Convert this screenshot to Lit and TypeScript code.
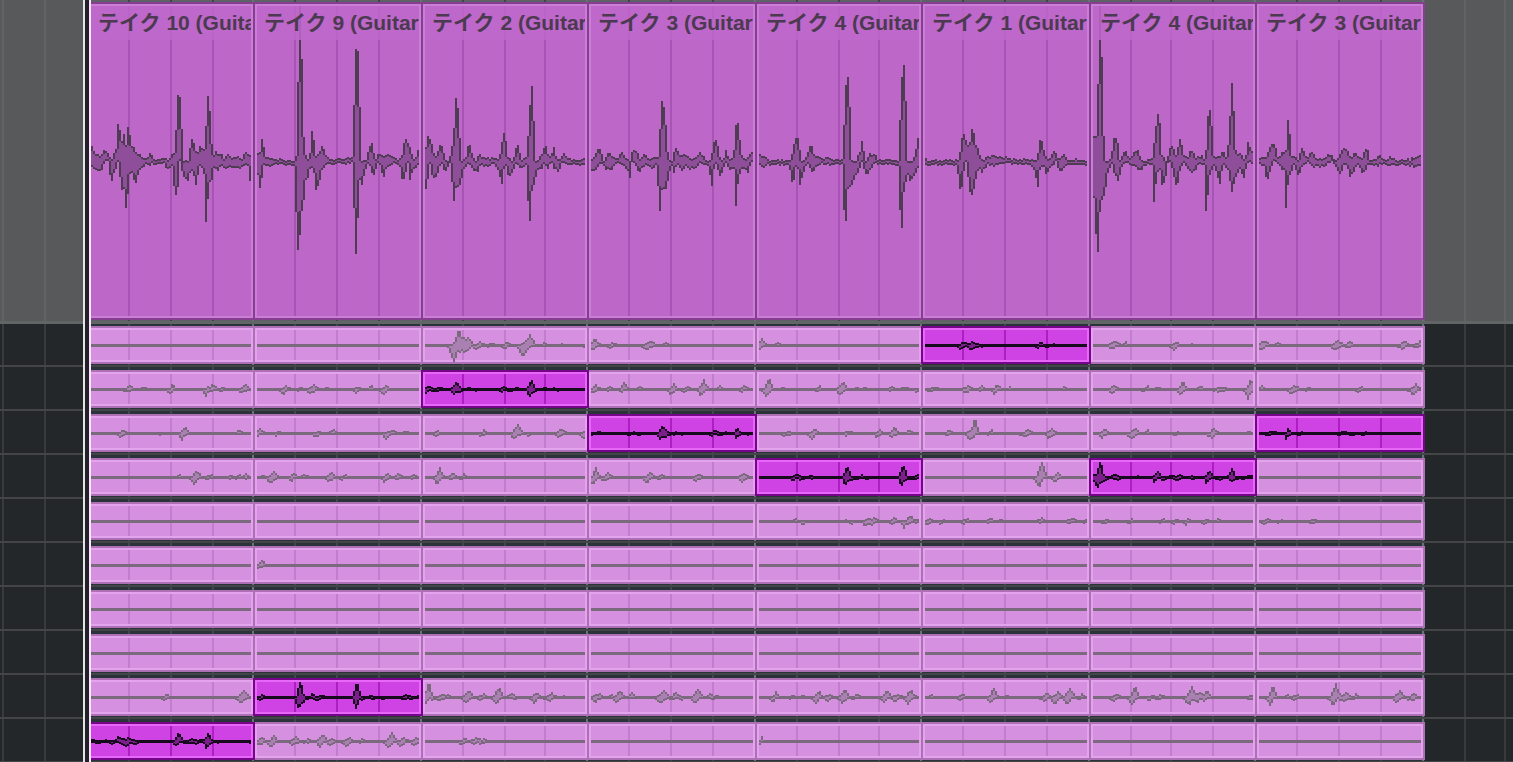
import { LitElement, html, svg, css } from "lit";
import { customElement, property } from "lit/decorators.js";

type Pair = [number, number];
/** x, height above the centre line, depth below it, half width */
type Bump = [number, number, number, number];

interface Segment {
  start: number;
  width: number;
  name: string;
  lane: number;
  top: Pair[];
  bottom: Pair[];
}

const CENTER = 161;
const TAKE_SCALE = 0.11;

const pairs = (text: string): Pair[] =>
  text.trim().split(/\s+/).map((p) => p.split(",").map(Number) as Pair);

const bumps = (text: string): Bump[] =>
  text.trim() === ""
    ? []
    : text.trim().split(/\s+/).map((p) => {
        const [x, up, down, half] = p.split(",").map(Number);
        return [x, up, down, half ?? 5] as Bump;
      });

const SEGMENTS: Segment[] = [
  {
    start: 87, width: 166, name: "テイク 10 (Guitar)", lane: 9,
    top: pairs("91,148 95,154 99,157 101,153 105,150 109,156 111,159 115,150 117,123 119,129 121,141 123,136 125,145 127,128 129,136 131,146 135,152 140,156 145,158 149,154 153,159 158,160 163,158 168,160 171,154 174,152 175,130 177,96 179,98 181,130 183,162 187,162 189,150 191,140 193,145 196,154 199,147 202,151 204,148 205,126 207,95 209,112 211,145 213,155 216,151 218,160 220,150 222,160 227,155 232,159 236,156 240,160 246,152 249,155 251,158"),
    bottom: pairs("91,168 94,171 100,172 102,166 107,160 109,175 111,181 113,174 115,168 117,163 119,178 121,189 124,190 125,207 127,194 129,175 131,172 134,185 137,176 139,169 144,165 150,164 158,163 164,165 168,171 171,165 173,185 175,194 177,188 179,160 182,176 187,180 190,170 193,176 195,185 197,174 200,163 203,175 205,221 207,199 209,181 211,179 213,168 218,172 220,164 226,169 233,167 238,169 243,165 247,165 249,180 251,180"),
  },
  {
    start: 253, width: 168, name: "テイク 9 (Guitar)", lane: 8,
    top: pairs("257,154 259,153 261,141 263,146 265,158 269,158 273,160 278,159 283,161 294,161 296,154 297,84 299,6 301,60 303,138 305,155 307,160 309,152 311,131 313,141 315,155 318,156 320,144 322,147 325,156 331,160 337,157 342,159 351,158 353,106 355,50 357,51 359,108 361,162 365,162 368,150 370,141 372,147 374,160 378,153 382,158 387,153 391,157 397,160 401,155 403,143 405,139 408,144 411,155 414,160 417,150 419,151"),
    bottom: pairs("257,174 259,189 261,178 262,165 270,167 277,164 283,163 293,163 295,211 297,250 299,236 301,210 303,200 305,180 308,176 310,165 313,172 315,189 318,184 321,170 325,164 330,165 338,163 345,164 351,163 353,208 355,254 357,217 359,180 361,184 364,170 368,163 371,172 374,174 377,164 380,166 382,180 385,170 390,164 398,164 400,172 402,183 404,175 407,164 409,179 412,170 416,168 419,163"),
  },
  {
    start: 421, width: 166, name: "テイク 2 (Guitar)", lane: 1,
    top: pairs("425,148 427,135 430,140 432,152 435,158 438,147 440,143 442,147 444,158 448,161 450,155 453,128 455,99 457,108 459,140 461,161 465,158 467,148 469,145 472,156 475,160 478,154 482,158 490,158 498,159 501,142 503,134 505,142 507,156 511,161 514,154 516,144 518,150 520,160 525,158 527,136 529,104 531,85 533,123 535,162 540,157 543,150 545,146 548,160 551,152 553,147 556,161 560,158 563,155 567,159 575,160 585,160"),
    bottom: pairs("425,190 427,178 429,164 431,174 434,181 437,172 440,162 444,172 447,166 450,163 451,182 453,202 455,188 459,184 461,178 463,168 468,163 472,170 476,173 479,165 485,166 493,164 498,172 501,183 503,168 505,166 508,178 512,172 516,162 520,170 525,166 527,200 529,221 531,191 534,182 537,170 541,168 544,162 547,170 550,160 553,168 557,171 561,164 570,165 585,164"),
  },
  {
    start: 587, width: 168, name: "テイク 3 (Guitar)", lane: 2,
    top: pairs("591,159 594,155 597,148 600,152 603,160 608,153 612,156 616,160 621,154 625,159 629,162 632,147 635,152 640,160 644,153 647,158 651,160 654,157 657,158 659,128 661,101 664,112 666,140 668,162 672,160 674,146 677,152 680,158 682,153 686,156 690,160 694,158 699,153 704,158 708,163 711,155 712,142 716,140 718,155 722,162 725,150 728,160 732,158 734,145 735,127 737,123 739,142 741,155 745,160 748,156 751,152 753,153"),
    bottom: pairs("591,171 596,170 600,162 605,169 611,170 616,163 620,163 626,168 629,177 631,163 635,165 638,174 641,168 646,163 650,169 655,166 657,186 659,211 661,190 665,190 668,175 671,163 673,172 676,165 681,171 686,165 688,169 695,167 701,163 707,165 709,175 711,185 713,168 716,162 718,180 721,172 725,163 729,169 733,168 735,205 737,183 739,174 742,168 747,172 751,162 753,164"),
  },
  {
    start: 755, width: 166, name: "テイク 4 (Guitar)", lane: 3,
    top: pairs("759,155 764,157 767,160 772,160 780,161 790,161 792,146 796,135 799,150 801,162 805,158 808,150 810,141 813,155 817,156 822,160 829,158 834,161 842,161 843,126 845,86 847,76 849,109 851,160 855,162 859,152 861,141 863,152 865,162 869,155 874,155 878,161 890,160 898,161 899,122 901,78 903,66 905,102 907,162 912,161 915,150 917,138 919,138"),
    bottom: pairs("759,166 763,167 769,164 779,165 788,163 790,175 792,192 794,170 796,162 799,185 802,174 806,164 811,172 815,168 820,163 826,166 834,163 841,164 843,210 845,220 847,190 851,185 855,175 858,172 861,162 864,174 868,172 873,165 880,162 890,164 897,165 899,210 901,227 903,193 906,175 909,180 914,174 919,165"),
  },
  {
    start: 921, width: 168, name: "テイク 1 (Guitar)", lane: 0,
    top: pairs("925,160 940,160 950,160 958,161 960,146 962,132 965,140 968,150 970,134 972,127 974,141 977,150 980,160 985,158 992,156 998,158 1006,158 1015,160 1030,160 1036,160 1038,146 1040,135 1043,152 1046,161 1050,157 1054,149 1058,160 1063,156 1067,160 1087,160"),
    bottom: pairs("925,165 940,164 950,164 956,165 958,181 960,198 962,175 965,163 968,184 970,199 972,193 975,178 978,168 981,172 986,165 994,166 1010,163 1030,164 1034,172 1037,187 1039,170 1042,165 1046,176 1050,166 1055,162 1058,170 1062,170 1066,164 1087,164"),
  },
  {
    start: 1089, width: 166, name: "テイク 4 (Guitar)", lane: 3,
    top: pairs("1093,137 1095,135 1097,84 1099,6 1101,57 1103,135 1105,162 1110,160 1112,141 1114,135 1117,145 1119,161 1124,152 1129,158 1133,154 1137,150 1141,161 1148,161 1152,158 1154,130 1157,114 1160,130 1161,155 1165,161 1168,154 1170,144 1173,148 1176,157 1178,138 1180,143 1183,155 1187,156 1191,150 1195,158 1200,156 1204,160 1206,140 1207,117 1209,110 1211,128 1213,155 1218,158 1222,151 1226,158 1229,118 1231,82 1233,110 1235,152 1240,155 1244,160 1247,144 1250,148 1253,157"),
    bottom: pairs("1093,198 1095,233 1097,251 1099,211 1101,200 1104,193 1107,172 1111,164 1114,176 1117,181 1120,170 1124,163 1130,165 1135,168 1140,170 1145,164 1151,165 1153,203 1155,185 1158,163 1161,185 1164,180 1167,163 1170,163 1173,178 1176,190 1178,175 1182,162 1187,170 1193,172 1198,164 1203,166 1205,210 1207,196 1209,175 1212,165 1215,172 1219,183 1222,165 1227,170 1231,193 1234,180 1239,170 1243,178 1247,163 1253,163"),
  },
  {
    start: 1255, width: 168, name: "テイク 3 (Guitar)", lane: 2,
    top: pairs("1259,159 1265,158 1268,150 1271,145 1274,145 1277,158 1282,152 1285,152 1286,140 1287,122 1289,134 1291,155 1297,160 1301,149 1306,157 1310,153 1316,158 1323,160 1328,154 1335,160 1338,158 1340,150 1346,150 1350,157 1354,152 1359,158 1362,158 1364,147 1367,152 1369,160 1374,160 1379,156 1384,160 1390,157 1396,160 1410,160 1416,155 1421,156"),
    bottom: pairs("1259,164 1263,166 1266,180 1269,172 1273,160 1278,166 1283,170 1285,208 1287,184 1289,176 1293,165 1298,176 1301,168 1306,163 1312,167 1322,167 1330,161 1336,167 1338,176 1341,170 1344,162 1349,176 1353,172 1356,164 1361,173 1364,170 1368,164 1376,166 1384,163 1390,166 1400,164 1414,167 1421,164"),
  },
];

const LANES: Bump[][] = [
  bumps("457,17,3,5 461,9,6,6 455,3,16,6 466,8,8,6 478,4,4,5 490,2,2,5 505,3,3,6 528,11,3,6 524,4,12,6 542,3,2,4 560,2,1,2 584,1,3,2 593,6,4,6 611,3,2,6 648,4,4,8 664,3,2,4 760,6,4,6 776,3,1,6 1113,4,3,7 1124,3,1,4 1175,4,4,5 1190,2,1,4 1262,5,5,6 1277,3,1,5 1336,5,5,6 1348,4,2,5 1403,5,4,5 1418,4,2,6"),
  bumps("128,4,3,5 142,3,1,4 171,5,4,4 207,3,6,4 211,5,2,5 221,3,2,4 243,5,4,5 284,4,5,5 298,3,2,4 312,5,4,5 325,2,1,4 357,3,4,4 370,3,1,4 384,4,5,5 398,2,1,2 594,4,3,5 608,3,2,4 622,7,4,4 638,3,1,5 672,5,5,5 686,3,3,5 702,10,7,4 718,3,1,4 743,4,2,5 767,11,7,5 781,3,1,5 818,3,2,4 841,8,6,5 855,3,1,4 863,3,1,3 890,3,2,4 903,3,1,4 918,1,4,2 932,3,2,7 967,4,4,6 980,3,2,4 995,5,5,4 1008,3,1,3 1062,3,2,4 1113,4,4,5 1146,3,2,4 1157,3,1,4 1181,9,6,4 1198,3,1,4 1220,3,3,7 1249,11,9,4 1260,4,2,5 1293,4,4,6 1307,3,1,4 1359,3,3,4 1414,5,5,5"),
  bumps("122,4,4,4 161,2,2,3 183,7,6,4 237,3,1,6 258,5,4,4 277,3,2,5 317,2,4,4 332,4,1,5 387,2,5,4 391,4,2,5 403,3,1,4 436,3,3,4 482,3,3,4 516,9,6,5 529,2,2,3 560,4,4,6 584,4,6,4 786,3,3,6 813,6,6,4 847,3,2,5 878,4,4,4 893,6,4,5 908,3,1,4 948,3,2,5 973,16,3,4 971,6,7,6 990,3,2,4 1005,2,2,3 1026,4,4,6 1050,5,5,5 1103,4,4,5 1133,6,6,5 1146,3,1,4 1176,2,2,3 1212,5,5,5 1247,3,1,4"),
  bumps("103,1,2,2 178,2,2,3 195,7,7,5 209,3,2,4 230,2,2,3 237,3,2,3 244,4,2,4 260,2,2,3 272,6,7,5 292,4,4,4 303,3,1,4 330,5,4,5 343,3,2,5 385,4,4,5 397,4,2,5 412,3,2,4 438,10,7,4 451,4,2,5 462,3,2,3 594,9,7,4 606,5,4,5 648,5,6,5 660,3,2,4 697,3,4,5 743,4,4,6 1040,16,10,5 1056,4,4,5"),
  bumps("794,3,1,2 804,1,4,4 845,2,1,3 853,1,3,3 867,4,5,5 873,4,4,4 893,4,3,5 909,6,2,5 905,2,7,3 918,2,2,3 928,3,3,5 942,2,3,3 965,3,3,5 988,3,2,4 1000,3,2,3 1040,3,2,5 1070,3,2,6 1085,3,1,3 1105,2,2,4 1130,3,2,4 1160,3,2,4 1175,3,2,3 1187,3,3,4 1205,3,3,5 1217,3,1,3 1265,3,3,5 1280,2,2,5 1312,3,3,4"),
  bumps("260,5,4,4"),
  [],
  [],
  bumps("165,3,3,5 242,7,6,6 427,15,5,4 434,1,4,4 440,4,3,4 446,3,1,3 467,7,6,5 481,4,3,4 497,10,6,5 510,4,1,4 516,1,3,3 535,5,5,5 550,4,4,6 561,2,1,3 597,4,4,6 609,3,1,3 618,7,6,5 630,4,1,4 662,7,6,6 674,5,2,4 682,1,3,3 696,8,6,5 709,4,1,4 715,2,2,3 774,6,5,3 790,2,1,3 802,2,1,3 817,6,6,5 828,3,4,5 843,8,6,5 855,4,2,5 885,7,5,5 896,4,5,5 909,8,6,5 930,3,1,5 961,3,3,5 992,10,6,4 1005,3,1,5 1045,5,5,4 1056,5,6,6 1068,9,7,5 1080,3,2,4 1115,4,4,4 1133,12,8,4 1150,3,4,4 1159,4,3,4 1190,11,8,5 1198,5,6,4 1205,8,4,4 1250,3,2,4 1271,12,8,4 1285,3,1,3 1295,3,3,4 1334,13,8,5 1344,5,5,5 1354,3,2,4 1398,7,5,5 1412,4,3,6"),
  bumps("260,4,4,5 272,6,7,4 294,4,4,6 306,3,2,4 321,7,5,5 331,3,4,4 347,4,5,5 360,3,2,3 390,9,6,5 402,4,5,5 415,4,4,5 463,3,3,5 475,4,2,6 482,2,3,4 760,4,3,3"),
];

/** Beat positions of the ruler; every fourth one opens a bar. */
const BEATS = [
  2, 44, 86, 128, 170, 212, 252, 294, 336, 378, 420, 462, 504, 544, 586, 628,
  670, 712, 754, 796, 838, 878, 920, 962, 1004, 1046, 1088, 1130, 1170, 1212,
  1254, 1296, 1338, 1380, 1422, 1464, 1504,
];
while (BEATS[BEATS.length - 1] < 3800) BEATS.push(BEATS[BEATS.length - 4] + 167);

const isBar = (index: number) => index % 4 === 2;

function sample(points: Pair[], x: number): number {
  if (x <= points[0][0]) return points[0][1];
  for (let i = 1; i < points.length; i++) {
    const [x1, y1] = points[i];
    if (x <= x1) {
      const [x0, y0] = points[i - 1];
      return y0 + ((y1 - y0) * (x - x0)) / (x1 - x0);
    }
  }
  return points[points.length - 1][1];
}

/** Repeatable fine grain of the signal, between -1 and 1. */
function grain(x: number): number {
  const v = Math.sin(x * 12.9898) * 43758.5453;
  return (v - Math.floor(v)) * 2 - 1;
}

/** Two-pixel columns: one path for the silhouette, one for the body inside its rim. */
function trace(xs: number[], tops: number[], ends: number[], rim: number) {
  let outer = "";
  let inner = "";
  xs.forEach((x, i) => {
    const t = tops[i];
    const b = ends[i];
    outer += `M${x} ${t}h2V${b}h-2z`;
    const it = Math.max(t + rim, tops[i - 1] ?? t, tops[i + 1] ?? t);
    const ib = Math.min(b - rim, ends[i - 1] ?? b, ends[i + 1] ?? b);
    if (ib > it) inner += `M${x} ${it}h2V${ib}h-2z`;
  });
  return { outer, inner };
}

@customElement("comp-clip")
class CompClip extends LitElement {
  @property({ attribute: false }) segment!: Segment;
  @property({ type: Number }) lane = -1;
  @property({ type: Boolean, reflect: true }) chosen = false;

  static styles = css`
    :host {
      --fill: #d690e0;
      --rim: #e3a3ed;
      --edge: #ae70b5;
      --beat: #c27dce;
      --wave: #7b6a7e;
      --body: #aa80b2;
      position: relative;
      display: grid;
      box-sizing: border-box;
      flex: none;
      margin-right: -2px;
      overflow: hidden;
      background: var(--fill);
      border: 2px solid var(--edge);
      box-shadow: inset 0 0 0 2px var(--rim);
    }
    :host([chosen]) {
      --fill: #cf42e4;
      --rim: #e767f8;
      --edge: #77058a;
      --beat: #ae1ec4;
      --wave: #170a1c;
      --body: #7c1f8c;
      z-index: 1;
    }
    :host([main]) {
      --fill: #bd68c9;
      --rim: #cb7ed6;
      --edge: #853e90;
      --beat: #a853b6;
      --wave: #4d3c52;
      --body: #8e4e99;
    }
    .wave {
      grid-area: 1 / 1;
      display: block;
    }
    .beat {
      fill: var(--beat);
    }
    .outer {
      fill: var(--wave);
    }
    .inner {
      fill: var(--body);
    }
    .name {
      grid-area: 1 / 1;
      align-self: start;
      margin: 2px 2px 0;
      padding-left: 7px;
      height: 34px;
      line-height: 34px;
      overflow: hidden;
      white-space: nowrap;
      background: rgb(189 104 201 / 0.86);
      color: #4b3a50;
      font-family: "Liberation Sans", "Noto Sans CJK JP", sans-serif;
      font-size: 21px;
      font-weight: 700;
    }
  `;

  private columns(first: number, last: number) {
    const xs: number[] = [];
    for (let x = first; x < last; x += 2) xs.push(x);
    return xs;
  }

  render() {
    const s = this.segment;
    const main = this.lane < 0;
    const end = s.start + s.width;
    const xs = this.columns(s.start + 4, end - 2);
    const height = main ? 314 : 34;
    let tops: number[];
    let ends: number[];
    if (main) {
      tops = xs.map((x) => {
        const y = sample(s.top, x);
        return Math.min(157, Math.round(y + (y > 20 ? grain(x) * 1.5 - 0.5 : 0)) - 4);
      });
      ends = xs.map((x, i) =>
        Math.max(tops[i] + 5, 157, Math.round(sample(s.bottom, x) + grain(x + 7) * 1.5) - 4)
      );
    } else {
      const level = (x: number, side: 1 | 2) => {
        if (this.chosen) {
          const y = sample(side === 1 ? s.top : s.bottom, x);
          return Math.abs(y - CENTER) * TAKE_SCALE + 0.4;
        }
        const shift = side === 1 ? 1 : -2;
        let best = 0;
        for (const b of LANES[this.lane]) {
          const near = 1 - Math.abs(x - b[0] - shift) / (b[3] + 1);
          if (near > 0) best = Math.max(best, b[side] * near + grain(x + side) * 0.8);
        }
        return best;
      };
      tops = xs.map((x) => Math.max(2, 16 - Math.max(0, Math.round(level(x, 1) - 1))));
      ends = xs.map((x) => 19 + Math.max(0, Math.round(level(x, 2) - 1)));
    }
    const path = trace(xs, tops, ends, 2);
    const beats = BEATS.filter((x) => x > s.start + 4 && x < end - 4);
    const width = s.width - 2;
    return html`
      <svg
        class="wave"
        width=${width}
        height=${height}
        viewBox="${s.start + 2} 0 ${width} ${height}"
        shape-rendering="crispEdges"
        aria-hidden="true"
      >
        ${beats.map(
          (x) => svg`<rect class="beat" x=${x} y="2" width="2" height=${height - 4}></rect>`
        )}
        <path class="outer" d=${path.outer}></path>
        <path class="inner" d=${path.inner}></path>
      </svg>
      ${main ? html`<div class="name">${s.name}</div>` : null}
    `;
  }
}

@customElement("app-root")
class AppRoot extends LitElement {
  static styles = css`
    :host {
      display: block;
      position: relative;
      min-height: 100vh;
      overflow: hidden;
      background: #232729;
    }
    .track {
      position: relative;
      display: grid;
      grid-template-columns: 87px auto 1fr;
      overflow: hidden;
    }
    .main {
      background: #58595a;
      border-bottom: 3px solid #626566;
    }
    .lane {
      border-bottom: 2px solid #434546;
    }
    .ruler {
      position: absolute;
      inset: 0;
      width: 100%;
      height: 100%;
      fill: #383b3d;
    }
    .main .ruler {
      fill: #626364;
    }
    .strip {
      position: relative;
      grid-column: 2;
      display: flex;
      padding: 3px 2px 1px 0;
      background: #2a323a;
    }
    .lane:first-of-type .strip {
      padding-top: 2px;
    }
    .main .strip {
      padding: 2px 2px 1px 0;
      background: #5e6266;
    }
    .strip .ruler {
      fill: #3f464d;
    }
    .strip .bar {
      fill: #6a7177;
    }
    comp-clip {
      height: 38px;
    }
    .main comp-clip {
      height: 318px;
    }
    .cursor {
      position: absolute;
      top: 0;
      bottom: 0;
      left: 83px;
      z-index: 2;
      width: 2px;
      border-right: 4px solid #231f2b;
      background: #e4e6e6;
      box-shadow: 2px 0 #fbe6fb;
    }
  `;

  private ruler(offset = 0) {
    return html`<svg class="ruler" shape-rendering="crispEdges" aria-hidden="true">
      ${BEATS.map(
        (x, i) =>
          svg`<rect class=${isBar(i) ? "bar" : ""} x=${x - offset} width="2" height="100%"></rect>`
      )}
    </svg>`;
  }

  private strip(lane: number) {
    return html`<div class="strip">
      ${this.ruler(87)}
      ${SEGMENTS.map(
        (s) => html`<comp-clip
          style="width:${s.width + 2}px"
          .segment=${s}
          .lane=${lane}
          ?main=${lane < 0}
          ?chosen=${lane >= 0 && s.lane === lane}
        ></comp-clip>`
      )}
    </div>`;
  }

  render() {
    return html`
      <section class="track main">${this.ruler()} ${this.strip(-1)}</section>
      ${LANES.map(
        (_, lane) => html`<div class="track lane">${this.ruler()} ${this.strip(lane)}</div>`
      )}
      <div class="cursor"></div>
    `;
  }
}
